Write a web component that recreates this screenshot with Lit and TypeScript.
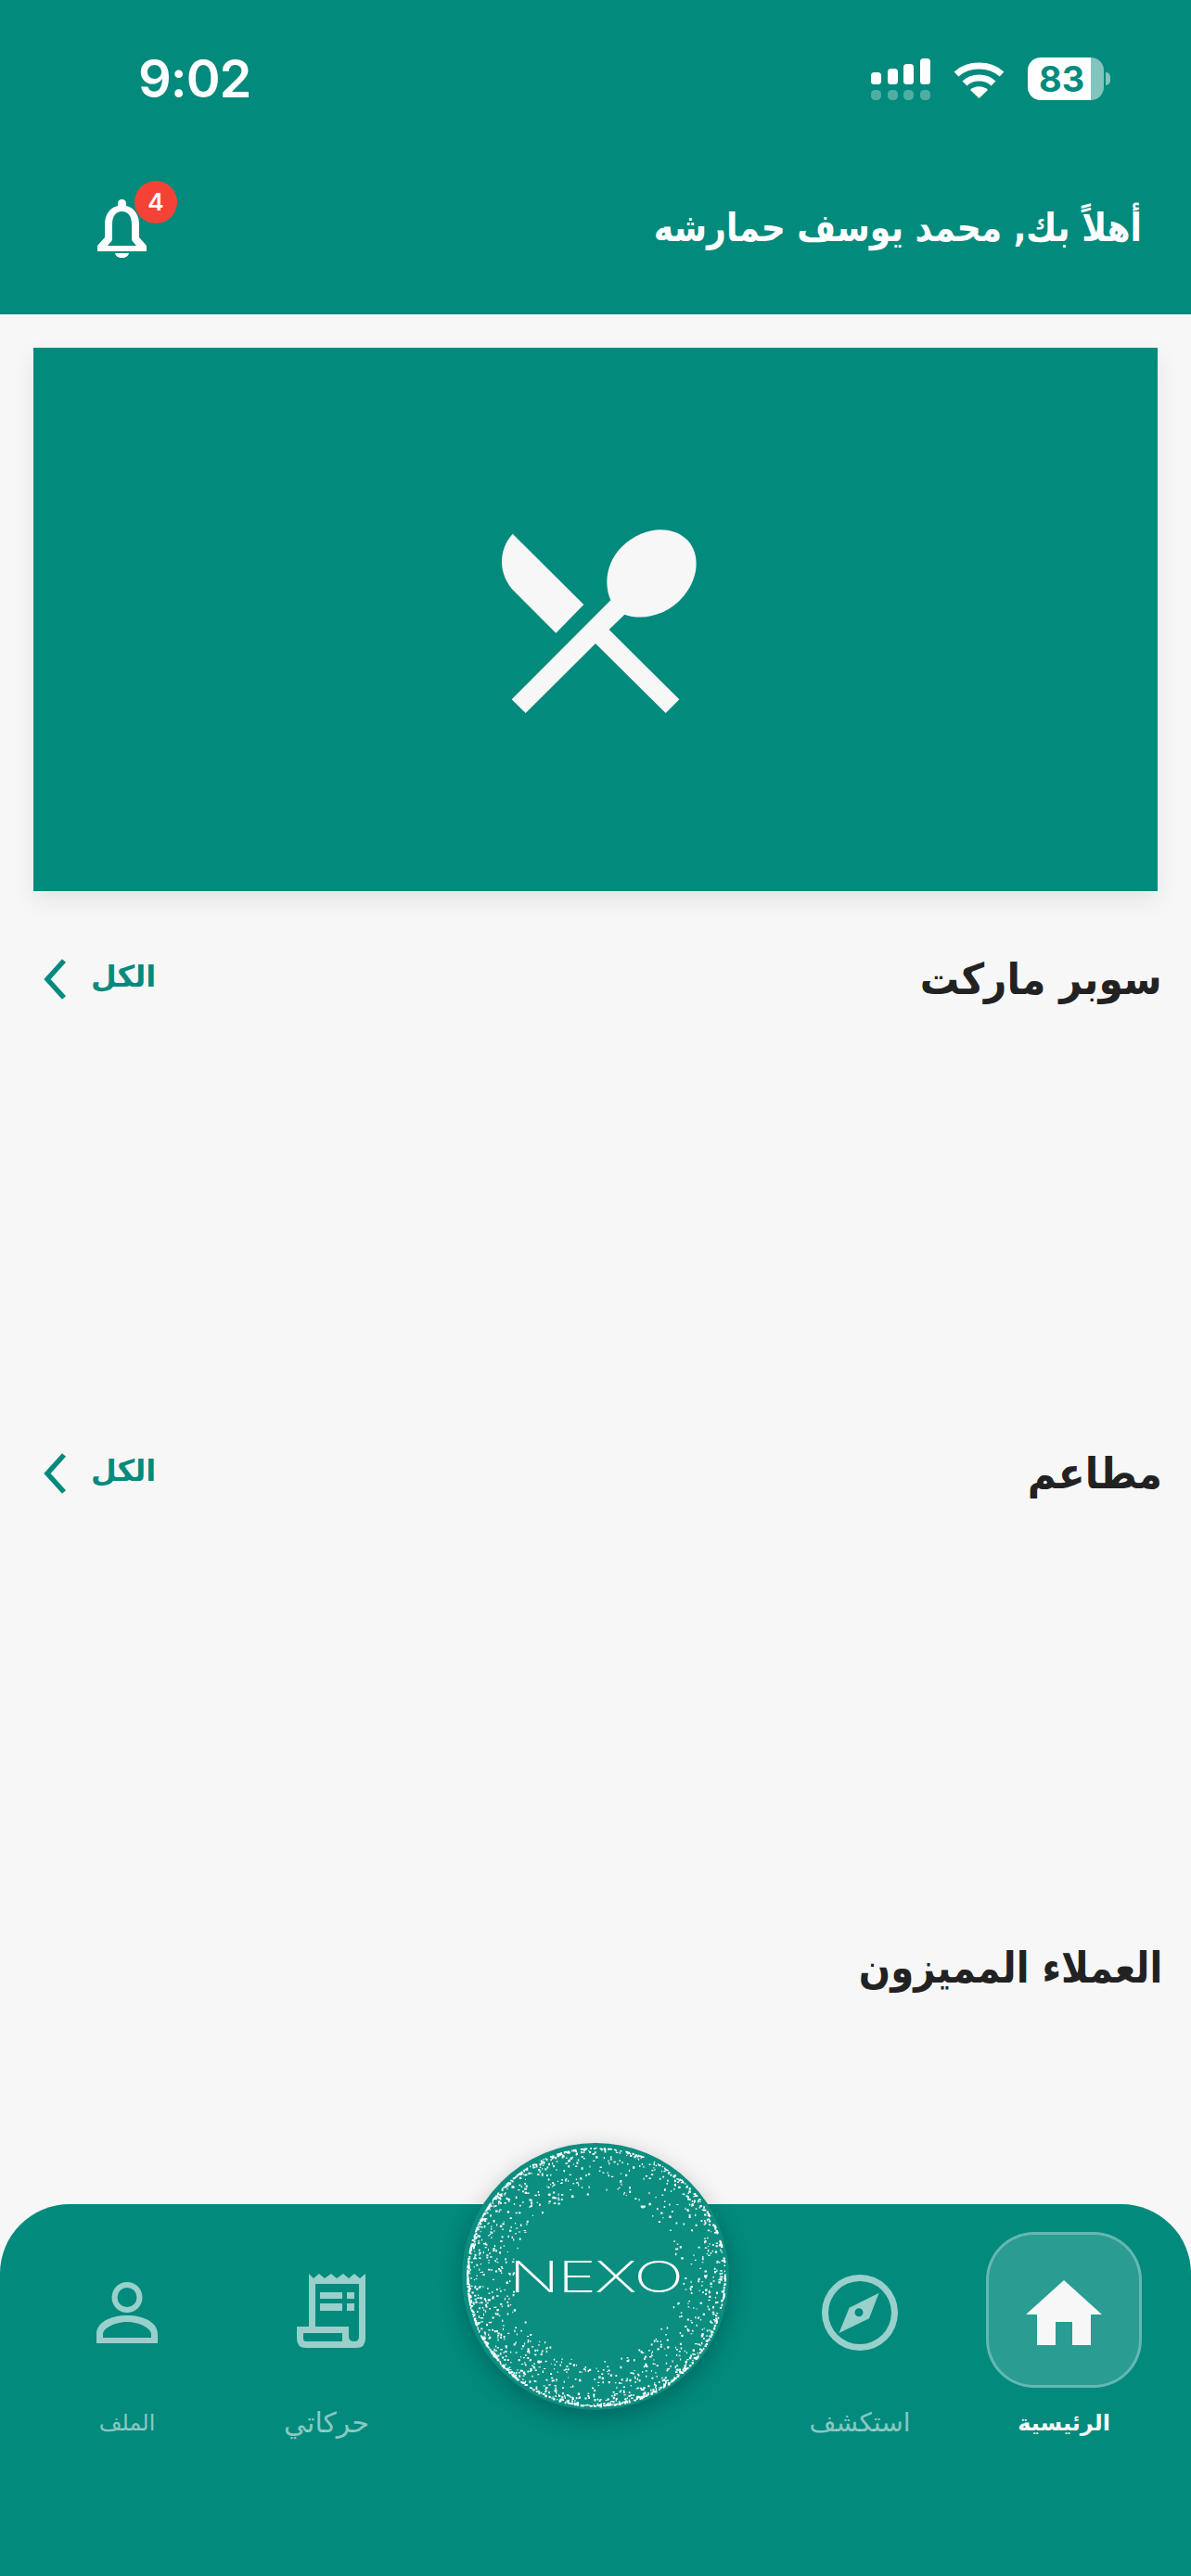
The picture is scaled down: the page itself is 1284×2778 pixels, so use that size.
import { LitElement, html, css, svg } from "lit";
import { customElement } from "lit/decorators.js";

function speckles(): string {
  let s = 91827;
  const rnd = () => {
    s = (s + 0x6d2b79f5) | 0;
    let t = Math.imul(s ^ (s >>> 15), 1 | s);
    t = (t + Math.imul(t ^ (t >>> 7), 61 | t)) ^ t;
    return ((t ^ (t >>> 14)) >>> 0) / 4294967296;
  };
  let d = "";
  for (let i = 0; i < 2300; i++) {
    const a = rnd() * Math.PI * 2;
    // the speckled band is thicker towards the lower left and upper left
    const keep = 0.62 + 0.38 * Math.cos(a - 2.4);
    if (rnd() > keep + 0.25) continue;
    const u = rnd();
    const depth = Math.pow(u, 3.6) * 50;
    const r = 139 - depth;
    const x = 144 + Math.cos(a) * r;
    const y = 144 + Math.sin(a) * r;
    const w = (1 + rnd() * 1.5).toFixed(1);
    const h = (1 + rnd() * 1.5).toFixed(1);
    d += `M${x.toFixed(1)} ${y.toFixed(1)}h${w}v${h}h-${w}z`;
  }
  return d;
}
const DOTS = speckles();

const chevron = html`<svg class="chev" viewBox="0 0 25 44"><path d="M22 2 L4 22 L22 42" /></svg>`;

@customElement("app-root")
export class AppRoot extends LitElement {
  static styles = css`
    :host {
      display: block;
      width: 1284px;
      height: 2778px;
      font-family: "DejaVu Sans", sans-serif;
      background: #f7f7f7;
      overflow: hidden;
    }
    .page { display: flex; flex-direction: column; height: 2778px; }
    .top { background: #028a7d; height: 339px; flex: none; color: #fff; }
    .status {
      height: 170px;
      display: flex;
      align-items: center;
      justify-content: space-between;
      padding: 0 87px 0 149px;
      box-sizing: border-box;
    }
    .time { font: 600 56px/1 Inter, sans-serif; letter-spacing: -1px; }
    .sys { display: flex; align-items: center; }
    .signal { width: 64px; height: 45px; margin-right: 25px; }
    .wifi { width: 55px; height: 41px; margin-right: 25px; margin-top: 1px; }
    .battery {
      width: 82px;
      height: 46px;
      border-radius: 14px;
      background: linear-gradient(90deg, #fff 83%, rgba(255, 255, 255, 0.5) 83%);
      color: #028a7d;
      font: 700 38px/46px Inter, sans-serif;
      padding-left: 12px;
      box-sizing: border-box;
    }
    .nub {
      width: 5px;
      height: 14px;
      margin-left: 2px;
      background: rgba(255, 255, 255, 0.5);
      border-radius: 0 7px 7px 0;
    }
    .hello {
      direction: rtl;
      height: 169px;
      display: flex;
      align-items: center;
      justify-content: space-between;
      padding: 0 53px 17px 105px;
      box-sizing: border-box;
    }
    .greet {
      font-size: 42px;
      font-weight: 700;
      line-height: 60px;
      white-space: nowrap;
      transform: scaleX(0.86);
      transform-origin: right center;
    }
    .bell { position: relative; width: 53px; height: 63px; }
    .bell svg { display: block; width: 53px; height: 63px; fill: #fff; }
    .badge {
      position: absolute;
      left: 40px;
      top: -20px;
      width: 46px;
      height: 46px;
      border-radius: 50%;
      background: #f44336;
      font: 600 26px/46px Inter, sans-serif;
      text-align: center;
      color: #fff;
    }
    main { flex: 1; min-height: 0; }
    .banner {
      margin: 36px 36px 0;
      height: 586px;
      background: #028a7d;
      display: flex;
      align-items: center;
      justify-content: center;
      box-shadow: 0 10px 24px rgba(0, 0, 0, 0.08);
    }
    .banner svg { width: 234px; height: 234px; fill: #f7f7f7; }
    .section { height: 533px; padding: 0 31px 0 47px; box-sizing: border-box; }
    .first { margin-top: 63px; }
    .head {
      direction: rtl;
      height: 64px;
      display: flex;
      align-items: center;
      justify-content: space-between;
    }
    .title {
      font-size: 46px;
      font-weight: 700;
      color: #222;
      line-height: 64px;
      white-space: nowrap;
      transform: scaleX(0.92);
      transform-origin: right center;
    }
    .title.narrow { transform: scaleX(0.875); }
    .all { display: flex; align-items: center; gap: 26px; color: #028a7d; }
    .all span { font-size: 32px; font-weight: 700; line-height: 44px; margin-top: -6px; }
    .chev { width: 25px; height: 44px; fill: none; stroke: #028a7d; stroke-width: 5.5; }
    nav {
      position: relative;
      flex: none;
      height: 401px;
      background: #028a7d;
      border-radius: 75px 75px 0 0;
      direction: rtl;
      display: grid;
      grid-template-columns: 220px 220px 1fr 220px 220px;
      padding: 30px 27px 0;
      box-sizing: border-box;
    }
    .item {
      display: flex;
      flex-direction: column;
      align-items: center;
      color: rgba(255, 255, 255, 0.55);
    }
    .icon {
      width: 168px;
      height: 168px;
      display: flex;
      align-items: center;
      justify-content: center;
      box-sizing: border-box;
      padding-top: 6px;
    }
    .icon svg { display: block; fill: rgba(255, 255, 255, 0.6); }
    .receipt { margin-top: -4px; }
    .label { font-size: 28px; line-height: 40px; margin-top: 18px; white-space: nowrap; }
    .label.sm { font-size: 24px; }
    .label.shift { font-size: 30px; margin-right: 10px; }
    .on { color: #f7f7f7; }
    .on .label { font-weight: 700; font-size: 24px; }
    .on .icon {
      background: rgba(255, 255, 255, 0.16);
      border: 3px solid rgba(255, 255, 255, 0.28);
      border-radius: 52px;
    }
    .on .icon svg { fill: #f7f7f7; }
    .logo {
      position: absolute;
      left: 498px;
      top: -66px;
      width: 288px;
      height: 288px;
      border-radius: 50%;
      background: #0b8e80;
      box-shadow: 0 8px 26px rgba(0, 0, 0, 0.25);
      display: flex;
      align-items: center;
      justify-content: center;
      direction: ltr;
    }
    .logo svg { position: absolute; inset: 0; width: 288px; height: 288px; fill: #fff; }
    .word {
      font: 200 46px/1 Inter, sans-serif;
      color: #fff;
      transform: scaleX(1.56);
      letter-spacing: -1.5px;
    }
  `;

  render() {
    return html`<div class="page">
      <div class="top">
        <div class="status">
          <div class="time">9:02</div>
          <div class="sys">
            <svg class="signal" viewBox="0 0 64 45" fill="#fff">
              <rect x="0" y="15" width="11" height="13" rx="3.5" />
              <rect x="18" y="11" width="11" height="17" rx="3.5" />
              <rect x="35" y="6" width="11" height="22" rx="3.5" />
              <rect x="53" y="0" width="11" height="28" rx="3.5" />
              <g opacity="0.3">
                <rect x="0" y="34" width="11" height="11" rx="4.5" />
                <rect x="18" y="34" width="11" height="11" rx="4.5" />
                <rect x="35" y="34" width="11" height="11" rx="4.5" />
                <rect x="53" y="34" width="11" height="11" rx="4.5" />
              </g>
            </svg>
            <svg class="wifi" viewBox="0 0 55 41">
              <path d="M3 15 C16 3 39 3 52 15" fill="none" stroke="#fff" stroke-width="7" />
              <path d="M12 25 C20 17 35 17 43 25" fill="none" stroke="#fff" stroke-width="7" />
              <path d="M27.5 41 L18 32 C23 27 32 27 37 32 Z" fill="#fff" />
            </svg>
            <div class="battery">83</div>
            <div class="nub"></div>
          </div>
        </div>
        <div class="hello">
          <div class="greet">أهلاً بك, محمد يوسف حمارشه</div>
          <div class="bell">
            <svg viewBox="0 0 53 63">
              <path fill-rule="evenodd" d="M26.5 0 Q31 0 31 5 V7 C40 9 45 17 45 27 V41 L53 50 V56 H0 V50 L8 41 V27 C8 17 13 9 22 7 V5 Q22 0 26.5 0Z M16 27 C16 18 20 13 26.5 13 C33 13 37 18 37 27 V44 L42 50 H11 L16 44Z" />
              <path d="M19 58 H34 C33 65 20 65 19 58 Z" />
            </svg>
            <div class="badge">4</div>
          </div>
        </div>
      </div>
      <main>
        <div class="banner">
          <svg viewBox="135 63 702 702">
            <path d="M218 137 L448 366 L358 458 L225 325 C170 270 170 190 218 137 Z" />
            <path d="M535 352 L215 673 L260 717 L486 492 L713 717 L757 673 L530 447 L580 398 C640 420 720 400 770 340 C825 275 825 190 775 150 C720 105 630 120 570 180 C525 225 510 295 535 352 Z" />
          </svg>
        </div>
        <section class="section first">
          <div class="head">
            <div class="title">سوبر ماركت</div>
            <div class="all"><span>الكل</span>${chevron}</div>
          </div>
        </section>
        <section class="section">
          <div class="head">
            <div class="title">مطاعم</div>
            <div class="all"><span>الكل</span>${chevron}</div>
          </div>
        </section>
        <section class="section">
          <div class="head"><div class="title narrow">العملاء المميزون</div></div>
        </section>
      </main>
      <nav>
        <div class="item on">
          <div class="icon">
            <svg width="82" height="70" viewBox="0 0 82 70"><path d="M41 0 L82 37 H70 V70 H50 V45 H32 V70 H12 V37 H0 Z" /></svg>
          </div>
          <div class="label">الرئيسية</div>
        </div>
        <div class="item">
          <div class="icon">
            <svg width="82" height="82" viewBox="0 0 82 82">
              <path fill-rule="evenodd" d="M41 0 A41 41 0 1 0 41 82 A41 41 0 1 0 41 0 Z M41 7 A34 34 0 1 1 41 75 A34 34 0 1 1 41 7 Z" />
              <path fill-rule="evenodd" d="M61.6 19.7 L51 47.3 L18.5 63 L29.6 35.7 Z M40 36.2 A4.5 4.5 0 1 0 40 45.2 A4.5 4.5 0 1 0 40 36.2 Z" />
            </svg>
          </div>
          <div class="label">استكشف</div>
        </div>
        <div></div>
        <div class="item">
          <div class="icon">
            <svg class="receipt" width="74" height="80" viewBox="0 0 74 80">
              <path fill-rule="evenodd" d="M13 0 L18 5 L24 0 L30 5 L37 0 L43 5 L50 0 L56 5 L62 0 L68 5 L74 0 V70 Q74 80 64 80 H10 Q0 80 0 70 V57 H13 Z M20 11 H67 V68 Q67 73 62 73 Q56 73 56 68 V57 H20 Z M7 64 H49 V73 H10 Q7 73 7 70 Z" />
              <rect x="25" y="20" width="24" height="7" />
              <rect x="25" y="32" width="24" height="8" />
              <rect x="54" y="20" width="8" height="7" />
              <rect x="54" y="32" width="8" height="8" />
            </svg>
          </div>
          <div class="label shift">حركاتي</div>
        </div>
        <div class="item">
          <div class="icon">
            <svg width="66" height="66" viewBox="0 0 66 66">
              <path fill-rule="evenodd" d="M33 0 A16.500 16.500 0 1 0 33 33 A16.500 16.500 0 1 0 33 0 Z M33 6 A10.500 10.500 0 1 1 33 27 A10.500 10.500 0 1 1 33 6 Z" />
              <path fill-rule="evenodd" d="M0 66 V56 C0 44 14 36 33 36 C52 36 66 44 66 56 V66 Z M7 60 H59 V56 C59 50 46 43 33 43 C20 43 7 50 7 56 Z" />
            </svg>
          </div>
          <div class="label sm">الملف</div>
        </div>
        <div class="logo">
          <svg viewBox="0 0 288 288">${svg`<path d=${DOTS} />`}</svg>
          <div class="word">NEXO</div>
        </div>
      </nav>
    </div>`;
  }
}
